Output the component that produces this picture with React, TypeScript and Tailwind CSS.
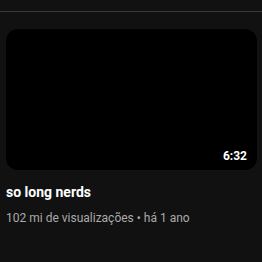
export default function App() {
  return (
    <div className="w-[262px] h-[262px] bg-[#111111] overflow-hidden" style={{ fontFamily: "Roboto, 'Liberation Sans', sans-serif" }}>
      <div className="h-[11px]" />
      <div className="h-[1px] bg-[#3a3a3a]" />
      <div className="pl-[6px] pr-[5px] pt-[17px]">
        <div className="relative w-[251px] h-[141px] bg-black rounded-[12px]">
          <span className="absolute right-[7px] bottom-[6px] px-[3px] text-white text-[12px] font-bold leading-[16px] rounded bg-black/80">6:32</span>
        </div>
        <div className="pt-[11px] text-white text-[14px] font-bold leading-[22px]">so long nerds</div>
        <div className="pt-[6px] text-[#aaaaaa] text-[12px] leading-[18px]">102 mi de visualizações • há 1 ano</div>
      </div>
    </div>
  );
}
